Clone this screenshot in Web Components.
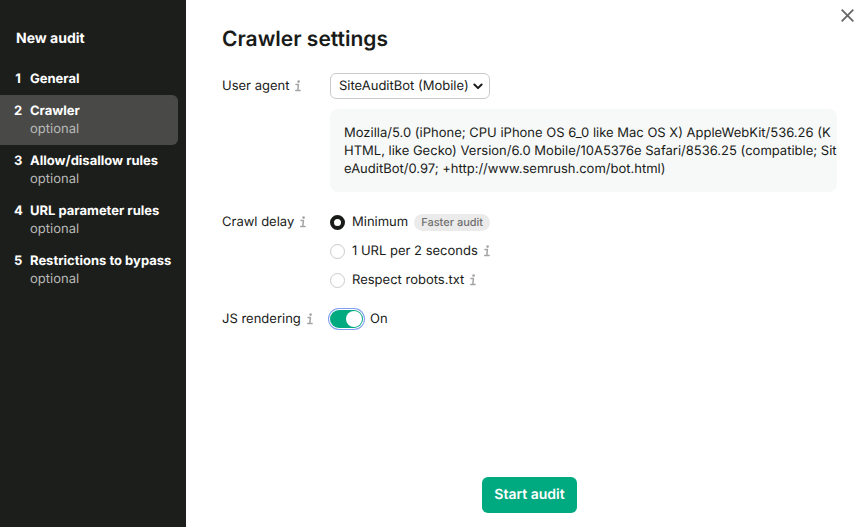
<!DOCTYPE html>
<html lang="en">
<head>
<meta charset="utf-8">
<title>New audit</title>
<style>
body {
	color: #191b19;
	font: 13px/18px Inter, "Liberation Sans", sans-serif;
	margin: 0;
	text-rendering: geometricPrecision;
}
</style>
</head>
<body>
<audit-wizard>
	<step-list slot="sidebar" heading="New audit">
		<step-item number="1" label="General"></step-item>
		<step-item number="2" label="Crawler" note="optional" current></step-item>
		<step-item number="3" label="Allow/disallow rules" note="optional"></step-item>
		<step-item number="4" label="URL parameter rules" note="optional"></step-item>
		<step-item number="5" label="Restrictions to bypass" note="optional"></step-item>
	</step-list>
	<crawler-settings></crawler-settings>
</audit-wizard>

<script>
function attach(element, style, html) {
	const template = document.createElement('template');
	template.innerHTML = `<style>*, *::before { box-sizing: border-box; } ${style}</style>${html}`;
	const shadowRoot = element.attachShadow({ mode: 'open' });
	shadowRoot.appendChild(template.content.cloneNode(true));
	return shadowRoot;
}

class AuditWizard extends HTMLElement {
	connectedCallback() {
		attach(this, `
:host {
	background: #fff;
	display: flex;
	min-height: 100vh;
}
aside {
	background: #1c1e1b;
	flex: none;
	padding: 30px 8px 0 0;
	width: 186px;
}
main {
	display: flex;
	flex: 1;
	flex-direction: column;
	min-width: 0;
	padding: 26px 26px 14px 36px;
}
.close {
	background: none;
	border: 0;
	color: #666;
	display: flex;
	padding: 4px;
	position: absolute;
	right: 5px;
	top: 5px;
}
.submit {
	align-self: center;
	background: #00aa80;
	border: 0;
	border-radius: 6px;
	color: #fff;
	font: 600 14px/20px Inter, sans-serif;
	margin-top: auto;
	padding: 8px 12px;
	text-rendering: inherit;
}
`, `
<aside><slot name="sidebar"></slot></aside>
<main>
	<slot></slot>
	<button class="submit" type="button">Start audit</button>
</main>
<button class="close" type="button" aria-label="Close">
	<svg width="13" height="13" viewBox="0 0 13 13" fill="none" stroke="currentColor" stroke-width="1.8"><path d="M.7.7l11.6 11.6M12.3.7L.7 12.3"/></svg>
</button>
`);
	}
}

class StepList extends HTMLElement {
	connectedCallback() {
		attach(this, `
:host { color: #fff; display: block; }
h2 {
	font-size: 14px;
	font-weight: 700;
	line-height: 18px;
	margin: 0 0 15px;
	padding-left: 16px;
}
nav { display: flex; flex-direction: column; }
`, `<h2>${this.getAttribute('heading')}</h2><nav><slot></slot></nav>`);
	}
}

class StepItem extends HTMLElement {
	connectedCallback() {
		const note = this.getAttribute('note');
		const current = this.hasAttribute('current') ? 'aria-current="step"' : '';
		attach(this, `
:host { display: block; }
a {
	border-radius: 0 6px 6px 0;
	color: inherit;
	display: grid;
	column-gap: 8px;
	grid-template-columns: 8px 1fr;
	padding: 7px 0 7px 14px;
	text-decoration: none;
}
a[aria-current] { background: #494a48; }
.number, .label { font-weight: 700; }
.number { text-align: center; }
.label { white-space: nowrap; }
.note { color: #b9bab8; grid-column: 2; }
`, `
<a href="#step-${this.getAttribute('number')}" ${current}>
	<span class="number">${this.getAttribute('number')}</span>
	<span class="label">${this.getAttribute('label')}</span>
	${note ? `<span class="note">${note}</span>` : ''}
</a>
`);
	}
}

class InfoIcon extends HTMLElement {
	connectedCallback() {
		attach(this, `
:host { color: #a3a5a3; display: inline-flex; }
`, `
<svg width="6" height="12" viewBox="0 0 6 12" aria-hidden="true">
	<circle cx="3.6" cy="1.6" r="1.3" fill="currentColor"/>
	<path d="M1 4.6h2.4L2.8 10.4M.7 10.5h4.4" fill="none" stroke="currentColor" stroke-width="1.5" stroke-linecap="round" stroke-linejoin="round"/>
</svg>
`);
	}
}

class TagBadge extends HTMLElement {
	connectedCallback() {
		attach(this, `
:host {
	background: #ebebeb;
	border-radius: 9px;
	color: #70716f;
	display: inline-block;
	font-size: 11px;
	font-weight: 500;
	line-height: 17px;
	padding: 0 7px;
}
`, '<slot></slot>');
	}
}

class SettingsRow extends HTMLElement {
	connectedCallback() {
		attach(this, `
:host {
	display: grid;
	grid-template-columns: 108px minmax(0, 1fr);
}
.label {
	align-items: center;
	align-self: start;
	display: flex;
	gap: 6px;
	min-height: var(--control-height, 18px);
}
`, `
<div class="label"><slot name="label"></slot><info-icon></info-icon></div>
<div><slot></slot></div>
`);
	}
}

class CrawlerSettings extends HTMLElement {
	connectedCallback() {
		const shadowRoot = attach(this, `
:host { display: block; }
h1 {
	font-size: 21px;
	font-weight: 600;
	line-height: 28px;
	margin: 0 0 19px;
}
form { display: flex; flex-direction: column; gap: 21px; }
.agent { --control-height: 26px; }
.select { display: inline-grid; align-items: center; vertical-align: top; }
.select > * { grid-area: 1 / 1; }
.select svg { justify-self: end; margin-right: 7px; pointer-events: none; }
select {
	appearance: none;
	background: #fff;
	border: 1px solid #c9cbc9;
	border-radius: 6px;
	color: inherit;
	font: inherit;
	height: 26px;
	padding: 0 20px 0 8px;
	text-rendering: inherit;
	width: 160px;
}
.agent-string {
	background: #f7f9f8;
	border-radius: 8px;
	margin: 10px 0 0;
	padding: 15px 0 14px 14px;
	word-break: break-all;
}
.options { display: flex; flex-direction: column; gap: 11px; }
.option { align-items: center; display: flex; gap: 6px; height: 18px; }
.option label, .switch { align-items: center; display: flex; gap: 7px; }
input { appearance: none; flex: none; margin: 0; }
[type=radio] {
	background: #fff;
	border: 1px solid #c9cbc9;
	border-radius: 50%;
	height: 15px;
	width: 15px;
}
[type=radio]:checked { border: 4px solid #191b19; }
.switch { height: 18px; }
[type=checkbox] {
	background: #b5b6b4;
	border-radius: 9px;
	display: flex;
	height: 18px;
	padding: 1px;
	width: 33px;
}
[type=checkbox]::before {
	background: #fff;
	border-radius: 50%;
	content: "";
	height: 16px;
	width: 16px;
}
[type=checkbox]:checked {
	background: #00aa80;
	box-shadow: 0 0 0 1px #fff, 0 0 0 2px #7f9df0;
	justify-content: flex-end;
}
`, `
<h1>Crawler settings</h1>
<form>
	<settings-row class="agent">
		<label slot="label" for="agent">User agent</label>
		<span class="select">
			<select id="agent">
				<option>SiteAuditBot (Mobile)</option>
				<option>SiteAuditBot (Desktop)</option>
			</select>
			<svg width="10" height="7" viewBox="0 0 10 7" fill="none" stroke="currentColor" stroke-width="2" stroke-linecap="round" stroke-linejoin="round"><path d="M1.4 1.5L5 5.1l3.6-3.6"/></svg>
		</span>
		<p class="agent-string">Mozilla/5.0 (iPhone; CPU iPhone OS 6_0 like Mac OS X) AppleWebKit/536.26 (K<br>HTML, like Gecko) Version/6.0 Mobile/10A5376e Safari/8536.25 (compatible; Sit<br>eAuditBot/0.97; +http://www.semrush.com/bot.html)</p>
	</settings-row>
	<settings-row>
		<span slot="label" id="delay">Crawl delay</span>
		<div class="options" role="radiogroup" aria-labelledby="delay">
			<div class="option">
				<label><input type="radio" name="delay" value="minimum" checked>Minimum</label>
				<tag-badge>Faster audit</tag-badge>
			</div>
			<div class="option">
				<label><input type="radio" name="delay" value="two-seconds">1 URL per 2 seconds</label>
				<info-icon></info-icon>
			</div>
			<div class="option">
				<label><input type="radio" name="delay" value="robots">Respect robots.txt</label>
				<info-icon></info-icon>
			</div>
		</div>
	</settings-row>
	<settings-row>
		<label slot="label" for="rendering">JS rendering</label>
		<div class="switch">
			<input id="rendering" type="checkbox" role="switch" checked>
			<span class="state">On</span>
		</div>
	</settings-row>
</form>
`);
		const toggle = shadowRoot.querySelector('#rendering');
		toggle.addEventListener('change', () => {
			shadowRoot.querySelector('.state').textContent = toggle.checked ? 'On' : 'Off';
		});
	}
}

window.customElements.define('info-icon', InfoIcon);
window.customElements.define('tag-badge', TagBadge);
window.customElements.define('settings-row', SettingsRow);
window.customElements.define('step-item', StepItem);
window.customElements.define('step-list', StepList);
window.customElements.define('crawler-settings', CrawlerSettings);
window.customElements.define('audit-wizard', AuditWizard);
</script>
</body>
</html>
